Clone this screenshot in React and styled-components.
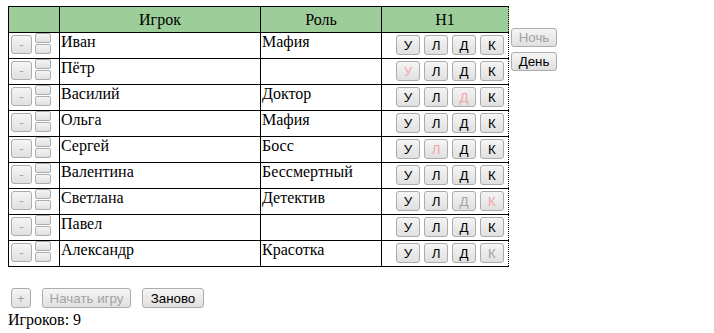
import React from 'react';
import styled, { createGlobalStyle } from 'styled-components';

const GlobalStyle = createGlobalStyle`
  body {
    margin: 6px 8px 8px;
    background: #fff;
    font: 16px "Liberation Serif", "Times New Roman", serif;
  }
`;

const players = [
  { name: 'Иван', role: 'Мафия', marks: ['', '', '', ''] },
  { name: 'Пётр', role: '', marks: ['pink', '', '', ''] },
  { name: 'Василий', role: 'Доктор', marks: ['', '', 'pink', ''] },
  { name: 'Ольга', role: 'Мафия', marks: ['', '', '', ''] },
  { name: 'Сергей', role: 'Босс', marks: ['', 'pink', '', ''] },
  { name: 'Валентина', role: 'Бессмертный', marks: ['', '', '', ''] },
  { name: 'Светлана', role: 'Детектив', marks: ['', '', 'gray', 'pink'] },
  { name: 'Павел', role: '', marks: ['', '', '', ''] },
  { name: 'Александр', role: 'Красотка', marks: ['', '', '', 'gray'] },
];

const actions = ['У', 'Л', 'Д', 'К'];

const toneColor = tone => (tone === 'pink' ? '#f7a3a3' : tone === 'gray' ? '#a3a3a3' : '#000');

const Page = styled.div`
  font: 16px "Liberation Serif", "Times New Roman", serif;
  color: #000;
`;

const Top = styled.div`
  display: flex;
  align-items: flex-start;
`;

const Table = styled.table`
  border-collapse: collapse;
  width: 500px;
  table-layout: fixed;
  font: 16px "Liberation Serif", "Times New Roman", serif;
`;

const Th = styled.th`
  background: #9dcd99;
  font-weight: normal;
  height: 25px;
  padding: 0;
  border: 1px solid #000;
  border-right-style: ${p => (p.$last ? 'dotted' : 'solid')};
  text-align: center;
  vertical-align: middle;
`;

const Td = styled.td`
  border: 1px solid #000;
  border-right-style: ${p => (p.$last ? 'dotted' : 'solid')};
  height: 25px;
  padding: 0 1px;
  vertical-align: top;
`;

const Btn = styled.button`
  font: 13.33px "Liberation Sans", Arial, sans-serif;
  color: ${p => toneColor(p.$tone)};
  background: linear-gradient(#f5f5f5, #e0e0e0);
  border: 1px solid #acacac;
  border-radius: 3px;
  padding: 0;
  height: ${p => p.$h || 20}px;
  width: ${p => p.$w}px;
  margin: 0;
  box-sizing: border-box;
`;

const ControlCell = styled.div`
  display: flex;
  align-items: flex-end;
  gap: 3px;
  padding-left: 1px;
  height: 21px;
`;

const Spinner = styled.div`
  display: flex;
  flex-direction: column;
  gap: 1px;
`;

const SpinPart = styled.div`
  width: 16px;
  height: 10px;
  box-sizing: border-box;
  border: 1px solid #acacac;
  border-radius: 2px;
  background: linear-gradient(#f5f5f5, #e0e0e0);
`;

const ActionRow = styled.div`
  display: flex;
  gap: 4px;
  padding: 2px 0 0 13px;
`;

const Side = styled.div`
  display: flex;
  flex-direction: column;
  gap: 5px;
  margin: 22px 0 0 2px;
`;

const Footer = styled.div`
  display: flex;
  gap: 11px;
  margin: 21px 0 0 3px;
`;

const Count = styled.div`
  margin-top: 3px;
`;

export default function App() {
  return (
    <Page>
      <GlobalStyle />
      <Top>
        <Table>
          <colgroup>
            <col width="51" />
            <col width="201" />
            <col width="121" />
            <col width="127" />
          </colgroup>
          <thead>
            <tr>
              <Th></Th>
              <Th>Игрок</Th>
              <Th>Роль</Th>
              <Th $last>H1</Th>
            </tr>
          </thead>
          <tbody>
            {players.map(p => (
              <tr key={p.name}>
                <Td>
                  <ControlCell>
                    <Btn $w={21} $h={19} $tone="gray">-</Btn>
                    <Spinner>
                      <SpinPart />
                      <SpinPart />
                    </Spinner>
                  </ControlCell>
                </Td>
                <Td>{p.name}</Td>
                <Td>{p.role}</Td>
                <Td $last>
                  <ActionRow>
                    {actions.map((a, i) => (
                      <Btn key={a} $w={24} $tone={p.marks[i]}>{a}</Btn>
                    ))}
                  </ActionRow>
                </Td>
              </tr>
            ))}
          </tbody>
        </Table>
        <Side>
          <Btn $w={46} $h={19} $tone="gray">Ночь</Btn>
          <Btn $w={46} $h={19}>День</Btn>
        </Side>
      </Top>
      <Footer>
        <Btn $w={20} $tone="gray">+</Btn>
        <Btn $w={89} $tone="gray">Начать игру</Btn>
        <Btn $w={62}>Заново</Btn>
      </Footer>
      <Count>Игроков: 9</Count>
    </Page>
  );
}
